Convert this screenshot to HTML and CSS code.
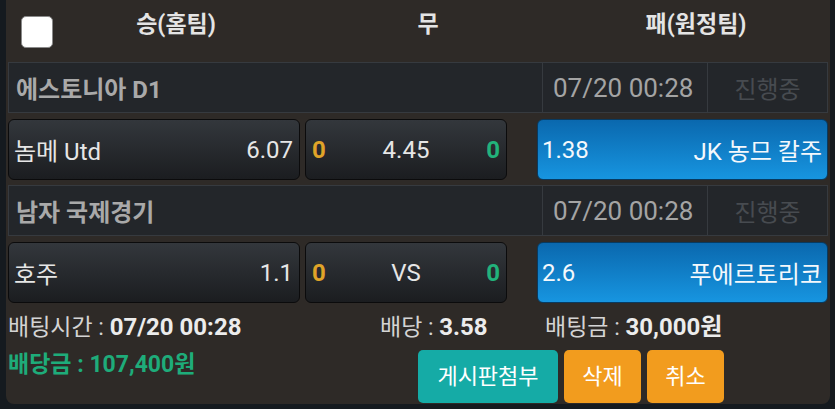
FILE: index.html
```html
<!DOCTYPE html>
<html lang="ko">
<head>
<meta charset="utf-8">
<link rel="stylesheet" href="styles.css">
</head>
<body>
<div class="card">
  <div class="head">
    <div class="check-col"><span class="check"></span></div>
    <div class="hcol">승(홈팀)</div>
    <div class="hcol">무</div>
    <div class="hcol">패(원정팀)</div>
  </div>

  <div class="league">
    <div class="lname">에스토니아 D1</div>
    <div class="ldate">07/20 00:28</div>
    <div class="lstatus">진행중</div>
  </div>
  <div class="odds">
    <div class="btn home"><span class="team">놈메 Utd</span><span class="rate">6.07</span></div>
    <div class="btn draw"><span class="sc-o">0</span><span class="mid">4.45</span><span class="sc-g">0</span></div>
    <div class="btn away sel"><span class="rate">1.38</span><span class="team">JK 농므 칼주</span></div>
  </div>

  <div class="league">
    <div class="lname">남자 국제경기</div>
    <div class="ldate">07/20 00:28</div>
    <div class="lstatus">진행중</div>
  </div>
  <div class="odds">
    <div class="btn home"><span class="team">호주</span><span class="rate">1.1</span></div>
    <div class="btn draw"><span class="sc-o">0</span><span class="mid">VS</span><span class="sc-g">0</span></div>
    <div class="btn away sel"><span class="rate">2.6</span><span class="team">푸에르토리코</span></div>
  </div>

  <div class="info">
    <div class="item">배팅시간 : <b>07/20 00:28</b></div>
    <div class="item">배당 : <b>3.58</b></div>
    <div class="item">배팅금 : <b>30,000원</b></div>
  </div>
  <div class="foot">
    <div class="payout">배당금 : 107,400원</div>
    <div class="actions">
      <span class="act teal">게시판첨부</span>
      <span class="act orange">삭제</span>
      <span class="act orange">취소</span>
    </div>
  </div>
</div>
</body>
</html>
```

FILE: styles.css
```css
* { box-sizing: border-box; }
html, body { margin: 0; padding: 0; }
body {
  width: 835px;
  height: 409px;
  background: #151a1f;
  font-family: Roboto, "Noto Sans CJK KR", sans-serif;
  overflow: hidden;
}
.card {
  margin-left: 6px;
  width: 824px;
  height: 404px;
  background: #2e2a27;
  border-radius: 0 0 8px 8px;
  padding: 0 2px;
}
.head {
  display: grid;
  grid-template-columns: 52px 232px 272px 1fr;
  height: 62px;
}
.check-col { padding: 16px 0 0 13px; }
.check {
  display: block;
  width: 32px;
  height: 32px;
  background: #fff;
  border: 1px solid #8a8a8a;
  border-radius: 5px;
}
.hcol {
  text-align: center;
  color: #e4e4e4;
  font-weight: bold;
  font-size: 23px;
  line-height: 30px;
  padding-top: 10px;
}
.league {
  display: grid;
  grid-template-columns: 533px 165px 1fr;
  height: 51px;
  background: #23262a;
  border: 1px solid #363a3f;
}
.league > div {
  display: flex;
  align-items: center;
}
.lname {
  padding-left: 7px;
  font-size: 24px;
  font-weight: bold;
  color: #a9a9a9;
}
.ldate {
  border-left: 1px solid #363a3f;
  padding-left: 10px;
  font-size: 26px;
  color: #a4a4a4;
}
.lstatus {
  border-left: 1px solid #363a3f;
  justify-content: center;
  font-size: 24px;
  color: #474b50;
}
.odds {
  display: flex;
  margin: 6px 0 5px;
  height: 61px;
}
.btn {
  display: flex;
  align-items: center;
  justify-content: space-between;
  padding: 0 6px 0 5px;
  border: 1px solid #0b0b0c;
  border-radius: 6px;
  background: linear-gradient(#33373c, #1b1d20);
  color: #e6e6e6;
  font-size: 24px;
}
.home { width: 292px; }
.draw {
  width: 202px;
  margin-left: 5px;
  display: grid;
  grid-template-columns: 1fr auto 1fr;
  padding: 0 6px;
}
.sc-o { color: #e0a428; font-weight: bold; }
.sc-g { color: #22b27b; font-weight: bold; text-align: right; }
.away { flex: 1; margin-left: 30px; padding: 0 5px 0 4px; }
.sel {
  background: linear-gradient(#0a68ae, #1795e0);
  border-color: #083a60;
  color: #f4f8fc;
}
.info {
  display: grid;
  grid-template-columns: 372px 165px 1fr;
  margin-top: 9px;
  height: 30px;
  line-height: 30px;
  font-size: 23px;
  color: #d4d4d4;
}
.info b {
  font-size: 24px;
  color: #ececec;
}
.foot {
  display: flex;
  margin-top: 8px;
}
.payout {
  width: 410px;
  line-height: 30px;
  font-size: 23px;
  font-weight: bold;
  color: #1eac7a;
}
.actions {
  display: flex;
  gap: 6px;
}
.act {
  height: 53px;
  line-height: 53px;
  border-radius: 5px;
  font-size: 22px;
  color: #fff;
  text-align: center;
}
.teal { background: #15aba6; width: 140px; }
.orange { background: #f29c1e; width: 77px; }
```
